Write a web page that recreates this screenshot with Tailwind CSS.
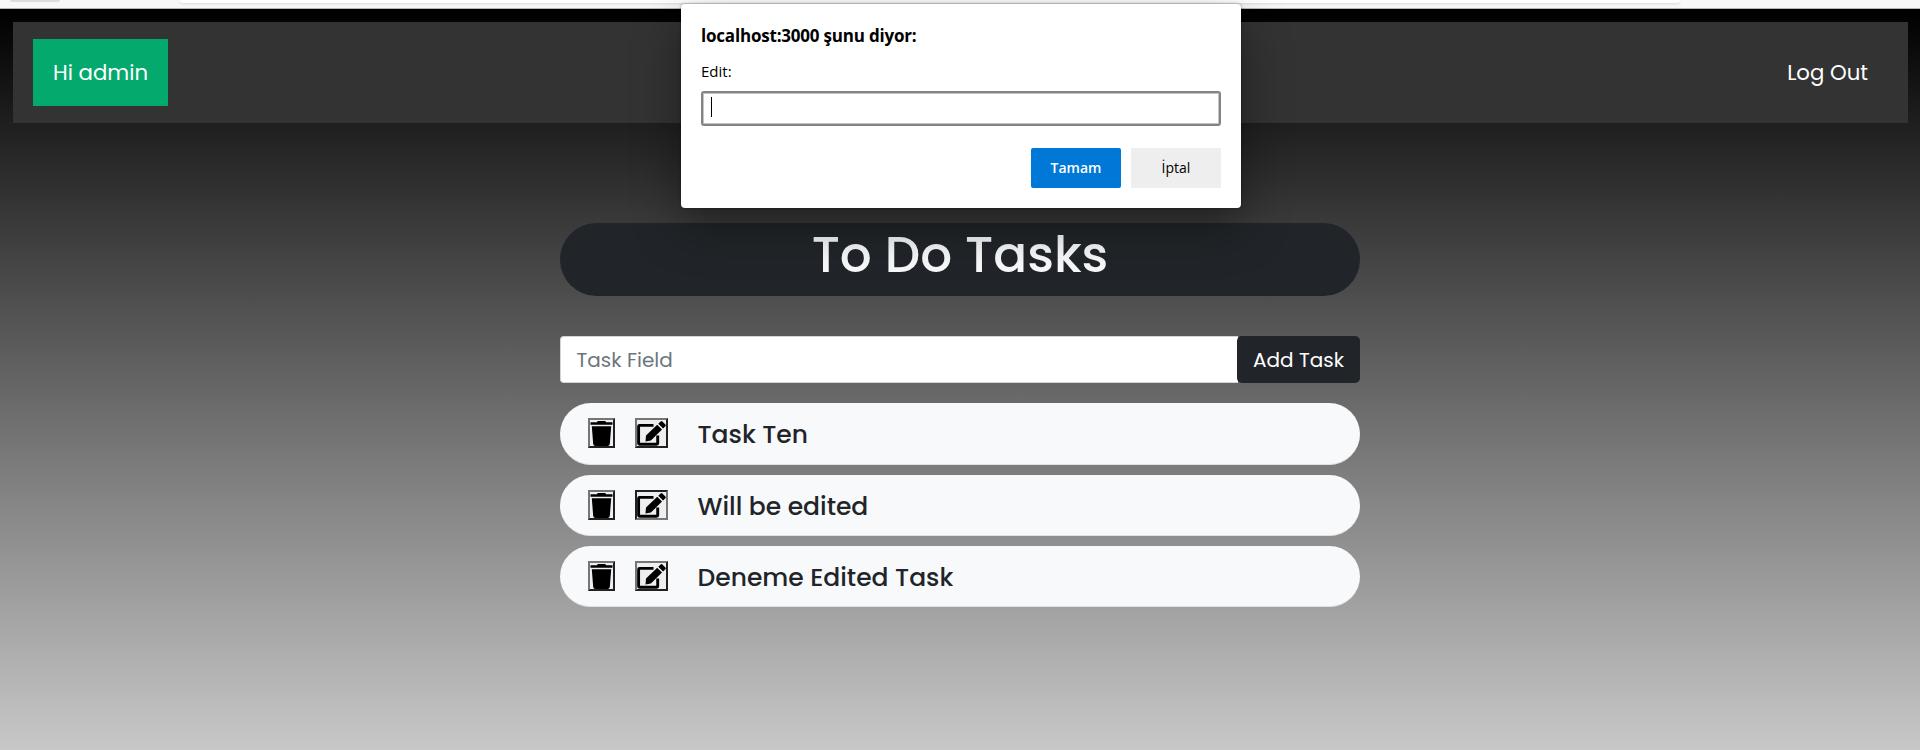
<!DOCTYPE html>
<html lang="tr">
<head>
<meta charset="utf-8">
<title>To Do Tasks</title>
<script src="https://cdn.jsdelivr.net/npm/@tailwindcss/browser@4"></script>
</head>
<body class="h-[750px] overflow-hidden font-[Poppins,Inter,sans-serif] text-[#212529]">
<svg class="hidden">
  <symbol id="trash" viewBox="0 0 23 26"><path d="M.5 2.200H7q.2-1.200 1.200-1.200h6.600Q15.800 1 16 2.200h6.500v2.500H.5zM1.800 6.200h19.400l-1.400 17.800q-.2 2-2.200 2H5.400q-2 0-2.200-2z"/></symbol>
  <symbol id="edit" viewBox="0 0 29 26"><path d="M16.500 5.400H2.600q-1 0-1 1V23.200q0 1 1 1H19.700q1 0 1-1V15.500" fill="none" stroke="#000" stroke-width="2.900"/><path d="M9 15.500 20.200 4.700l4.800 4.800L13.900 20.600 8.500 21.500zM21.300 3.700l2.300-2.300q.9-.9 1.800 0l3 3q.9.900 0 1.800l-2.300 2.300z"/></symbol>
</svg>
<div class="relative flex h-[750px] flex-col">
  <div class="flex h-[9px] items-start border-b border-[#b5b5b5] bg-[#f7f7f7]">
    <div class="ml-[10px] h-[2px] w-[50px] rounded-b-sm bg-[#dcdcdc]"></div>
    <div class="ml-[120px] h-[3px] w-[1500px] rounded-b bg-white shadow-sm"></div>
  </div>
  <main class="flex-1 bg-linear-to-b/srgb from-black to-[#c8c8c8] pt-[13px] pr-3 pl-[13px]">
    <nav class="flex h-[101px] items-center justify-between bg-[#333] px-5 text-[21.25px] text-white">
      <a class="flex h-[67px] w-[135px] items-center justify-center bg-[#04aa6d] whitespace-nowrap"><span>Hi admin</span></a>
      <a class="pr-5 whitespace-nowrap"><span>Log Out</span></a>
    </nav>
    <section class="mt-[100px] ml-[547px] w-[800px]">
      <h1 class="flex h-[73px] justify-center rounded-full bg-[#212529] pt-[2px] text-[50px] leading-[60px] font-medium whitespace-nowrap text-[#f8f9fa]"><span>To Do Tasks</span></h1>
      <div class="mt-10 flex h-[47px] text-xl">
        <div class="flex flex-1 items-center rounded-l border border-r-0 border-[#ced4da] bg-white pl-[15.5px] text-[#6c757d]"><span>Task Field</span></div>
        <div class="-ml-px flex w-[123px] items-center justify-center rounded-[5px] bg-[#212529] whitespace-nowrap text-white"><span>Add Task</span></div>
      </div>
      <ul class="mt-5 flex flex-col gap-[10px] text-[25px] font-medium">
        <li class="flex h-[62px] items-start rounded-full border-b border-[#dee2e6] bg-[#f8f9fa] pt-[15px] pl-7">
          <button class="flex h-[30px] w-[27px] items-center justify-center border-2 border-t-[#767676] border-l-[#767676] border-r-[#212121] border-b-[#212121] bg-[#efefef]"><svg class="h-[26px] w-[23px]"><use href="#trash"/></svg></button>
          <button class="ml-5 flex h-[30px] w-[33px] items-center justify-center border-2 border-t-[#767676] border-l-[#767676] border-r-[#212121] border-b-[#212121] bg-[#efefef]"><svg class="h-[26px] w-[29px]"><use href="#edit"/></svg></button>
          <span class="ml-[29.5px] pt-[2px] leading-[30px]">Task Ten</span>
        </li>
        <li class="flex h-[61px] items-start rounded-full border-b border-[#dee2e6] bg-[#f8f9fa] pt-[15px] pl-7">
          <button class="flex h-[30px] w-[27px] items-center justify-center border-2 border-t-[#767676] border-l-[#767676] border-r-[#212121] border-b-[#212121] bg-[#efefef]"><svg class="h-[26px] w-[23px]"><use href="#trash"/></svg></button>
          <button class="ml-5 flex h-[30px] w-[33px] items-center justify-center border-2 border-t-[#212121] border-l-[#212121] border-r-[#767676] border-b-[#767676] bg-[#efefef]"><svg class="h-[26px] w-[29px]"><use href="#edit"/></svg></button>
          <span class="ml-[29.5px] pt-[2px] leading-[30px]">Will be edited</span>
        </li>
        <li class="flex h-[61px] items-start rounded-full border-b border-[#dee2e6] bg-[#f8f9fa] pt-[15px] pl-7">
          <button class="flex h-[30px] w-[27px] items-center justify-center border-2 border-t-[#767676] border-l-[#767676] border-r-[#212121] border-b-[#212121] bg-[#efefef]"><svg class="h-[26px] w-[23px]"><use href="#trash"/></svg></button>
          <button class="ml-5 flex h-[30px] w-[33px] items-center justify-center border-2 border-t-[#767676] border-l-[#767676] border-r-[#212121] border-b-[#212121] bg-[#efefef]"><svg class="h-[26px] w-[29px]"><use href="#edit"/></svg></button>
          <span class="ml-[29.5px] pt-[2px] leading-[30px]">Deneme Edited Task</span>
        </li>
      </ul>
    </section>
  </main>
  <div class="absolute top-1 left-[681px] flex h-[204px] w-[560px] flex-col rounded-[4px] bg-white px-5 font-['Segoe_UI','Open_Sans',sans-serif] text-black shadow-[0_18px_48px_rgba(0,0,0,0.4),0_0_3px_rgba(0,0,0,0.4)]">
    <div class="mt-[19px] h-[26px] text-[17px] leading-[26px] font-bold tracking-[-0.2px] whitespace-nowrap"><span>localhost:3000 şunu diyor:</span></div>
    <div class="mt-[12px] h-5 text-[15px] leading-5"><span>Edit:</span></div>
    <div class="mt-[10px] flex h-[35px] rounded-[3px] border-2 border-[#838383] pt-1 pl-2 shadow-[inset_0_0_0_1px_#c4c4c4]"><i class="h-5 w-px bg-black"></i></div>
    <div class="mt-[22px] flex h-10 justify-end gap-[10px] text-[14px]">
      <div class="flex w-[90px] items-center justify-center rounded-[2px] bg-[#0078d7] pb-px font-semibold text-white"><span>Tamam</span></div>
      <div class="flex w-[90px] items-center justify-center rounded-[2px] bg-[#eee] pb-px"><span>İptal</span></div>
    </div>
  </div>
</div>
</body>
</html>
